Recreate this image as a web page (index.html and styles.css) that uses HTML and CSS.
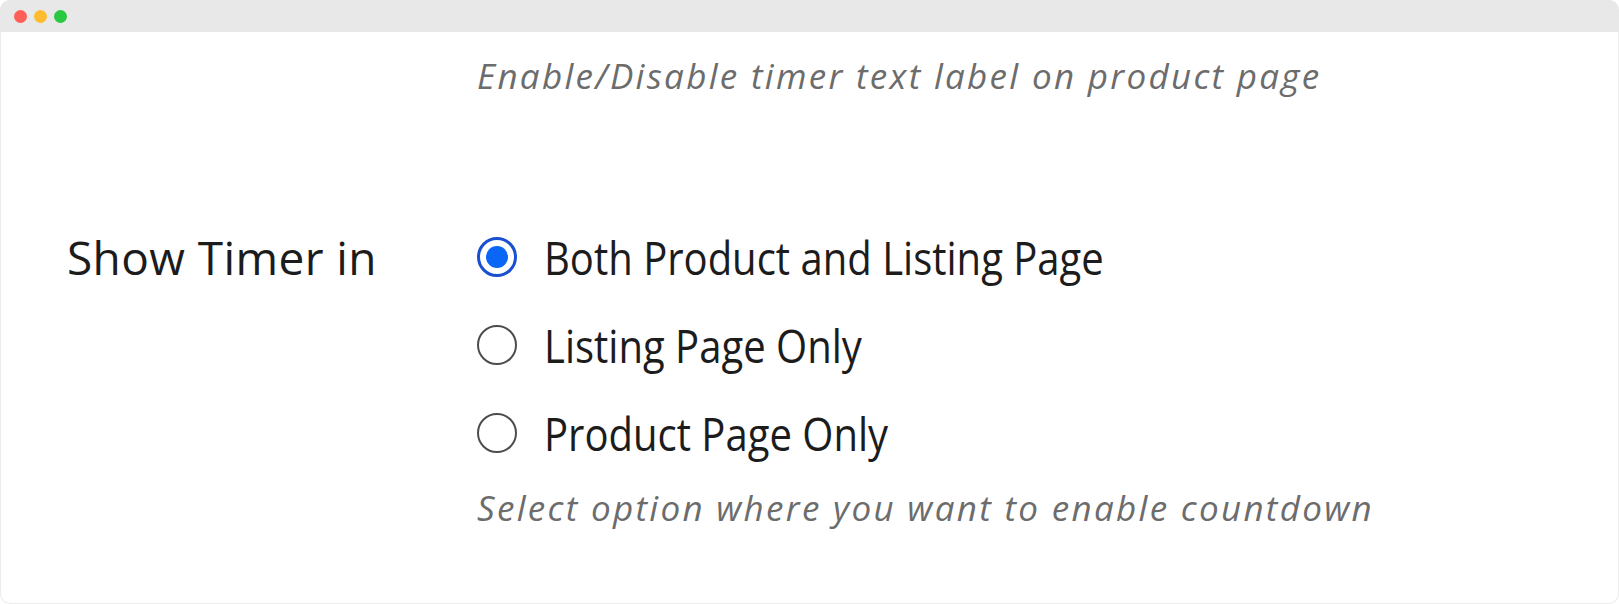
FILE: index.html
```html
<!DOCTYPE html>
<html>
<head>
<meta charset="utf-8">
<link rel="stylesheet" href="styles.css">
</head>
<body>
<div class="window">
  <div class="titlebar">
    <span class="dot red"></span>
    <span class="dot yellow"></span>
    <span class="dot green"></span>
  </div>
  <div class="content">
    <div class="row top-row">
      <div class="label"></div>
      <div class="field">
        <p class="desc">Enable/Disable timer text label on product page</p>
      </div>
    </div>
    <div class="row setting-row">
      <div class="label">Show Timer in</div>
      <div class="field">
        <div class="options">
          <label class="option"><span class="radio checked"></span><span class="opt-text">Both Product and Listing Page</span></label>
          <label class="option"><span class="radio"></span><span class="opt-text">Listing Page Only</span></label>
          <label class="option"><span class="radio"></span><span class="opt-text">Product Page Only</span></label>
        </div>
        <p class="desc">Select option where you want to enable countdown</p>
      </div>
    </div>
  </div>
</div>
</body>
</html>
```
FILE: styles.css
```css
html, body {
  margin: 0;
  padding: 0;
  background: #ffffff;
}
body {
  width: 1619px;
  height: 604px;
  overflow: hidden;
  font-family: "Open Sans", "Liberation Sans", sans-serif;
}
.window {
  width: 1619px;
  height: 604px;
  border-radius: 10px;
  overflow: hidden;
  background: #ffffff;
  box-shadow: inset 0 0 0 1px #ececec;
}
.titlebar {
  height: 32px;
  background: #e8e8e8;
  display: flex;
  align-items: center;
  gap: 7px;
  padding-left: 14px;
}
.dot {
  width: 13px;
  height: 13px;
  border-radius: 50%;
  display: inline-block;
}
.red { background: #fe5f57; }
.yellow { background: #febc2e; }
.green { background: #28c840; }
.content {
  display: flex;
  flex-direction: column;
}
.row {
  display: flex;
}
.label {
  width: 410px;
  padding-left: 67px;
  flex: none;
  font-size: 46px;
  letter-spacing: 0.4px;
  color: #1c1c1c;
  line-height: 56px;
}
.desc {
  margin: 0;
  font-style: italic;
  font-size: 35px;
  letter-spacing: 2.3px;
  color: #6c6c6c;
  line-height: 48px;
}
.top-row {
  padding-top: 20px;
}
.setting-row {
  margin-top: 129px;
}
.options {
  display: flex;
  flex-direction: column;
  gap: 32px;
}
.option {
  display: flex;
  align-items: center;
  gap: 27px;
  height: 56px;
}
.radio {
  width: 36px;
  height: 36px;
  border: 2.5px solid #4d4d4d;
  border-radius: 50%;
  flex: none;
  box-sizing: content-box;
  position: relative;
}
.radio.checked {
  border: 3.5px solid #1a4fd0;
  width: 34px;
  height: 34px;
}
.radio.checked::after {
  content: "";
  position: absolute;
  left: 6px;
  top: 6px;
  width: 22px;
  height: 22px;
  border-radius: 50%;
  background: #0a66f5;
}
.opt-text {
  display: inline-block;
  font-size: 46px;
  color: #1c1c1c;
  line-height: 56px;
  white-space: nowrap;
  transform: scaleX(0.87);
  transform-origin: left center;
}
.setting-row .desc {
  margin-top: 23px;
}
```
